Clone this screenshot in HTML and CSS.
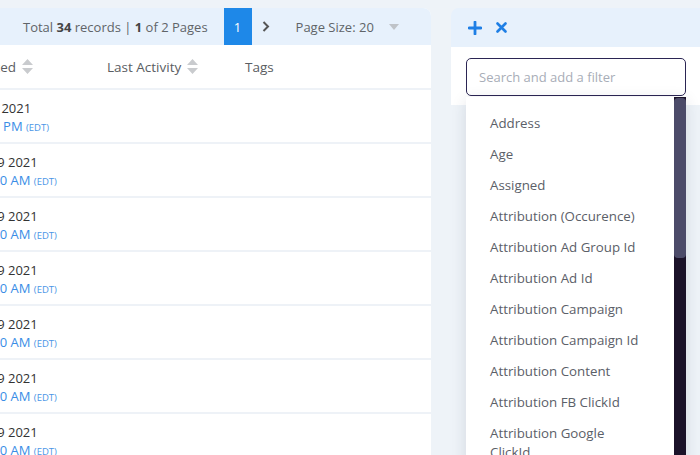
FILE: index.html
```html
<!DOCTYPE html>
<html>
<head>
<meta charset="utf-8">
<link rel="stylesheet" href="styles.css">
</head>
<body>
<div class="page">
  <section class="card">
    <div class="pager">
      <span class="total">Total <b>34</b> records | <b>1</b> of 2 Pages</span>
      <span class="page-btn">1</span>
      <svg class="chev" width="8" height="11" viewBox="0 0 8 11"><path d="M1.5 1 L6 5.5 L1.5 10" fill="none" stroke="#555" stroke-width="2"/></svg>
      <span class="size">Page Size: 20</span>
      <svg class="caret" width="10" height="6" viewBox="0 0 10 6"><path d="M0 0 H10 L5 6 Z" fill="#bfc3c8"/></svg>
    </div>
    <div class="thead">
      <div class="th th-created">Date Created <svg class="sort" width="11" height="15" viewBox="0 0 11 15"><path d="M5.5 0 L11 6 H0 Z M0 9 H11 L5.5 15 Z" fill="#c9cbce"/></svg></div>
      <div class="th">Last Activity <svg class="sort" width="11" height="15" viewBox="0 0 11 15"><path d="M5.5 0 L11 6 H0 Z M0 9 H11 L5.5 15 Z" fill="#c9cbce"/></svg></div>
      <div class="th">Tags</div>
    </div>
    <div class="row">
      <div class="cell-created"><div class="date">Aug 1 2021</div><div class="time">1:47 PM <small>(EDT)</small></div></div>
      <div></div><div></div>
    </div>
    <div class="row">
      <div class="cell-created"><div class="date">Sep 29 2021</div><div class="time">10:30 AM <small>(EDT)</small></div></div>
      <div></div><div></div>
    </div>
    <div class="row">
      <div class="cell-created"><div class="date">Sep 29 2021</div><div class="time">10:30 AM <small>(EDT)</small></div></div>
      <div></div><div></div>
    </div>
    <div class="row">
      <div class="cell-created"><div class="date">Sep 29 2021</div><div class="time">10:30 AM <small>(EDT)</small></div></div>
      <div></div><div></div>
    </div>
    <div class="row">
      <div class="cell-created"><div class="date">Sep 29 2021</div><div class="time">10:30 AM <small>(EDT)</small></div></div>
      <div></div><div></div>
    </div>
    <div class="row">
      <div class="cell-created"><div class="date">Sep 29 2021</div><div class="time">10:30 AM <small>(EDT)</small></div></div>
      <div></div><div></div>
    </div>
    <div class="row">
      <div class="cell-created"><div class="date">Sep 29 2021</div><div class="time">10:30 AM <small>(EDT)</small></div></div>
      <div></div><div></div>
    </div>
  </section>

  <aside class="panel">
    <div class="panel-head">
      <svg class="ico" width="14" height="14" viewBox="0 0 14 14"><path d="M7 1 V13 M1 7 H13" stroke="#1f7fe5" stroke-width="2.8" stroke-linecap="round"/></svg>
      <svg class="ico" width="11" height="11" viewBox="0 0 11 11"><path d="M1.5 1.5 L9.5 9.5 M9.5 1.5 L1.5 9.5" stroke="#1f7fe5" stroke-width="2.6" stroke-linecap="round"/></svg>
    </div>
    <div class="panel-body">
      <input class="search" type="text" placeholder="Search and add a filter">
    </div>
    <div class="dropdown">
      <ul class="options">
        <li>Address</li>
        <li>Age</li>
        <li>Assigned</li>
        <li>Attribution (Occurence)</li>
        <li>Attribution Ad Group Id</li>
        <li>Attribution Ad Id</li>
        <li>Attribution Campaign</li>
        <li>Attribution Campaign Id</li>
        <li>Attribution Content</li>
        <li>Attribution FB ClickId</li>
        <li>Attribution Google ClickId</li>
        <li>Attribution Medium</li>
      </ul>
      <div class="scrollbar"><div class="thumb"></div></div>
    </div>
  </aside>
</div>
</body>
</html>
```

FILE: styles.css
```css
html, body {
  margin: 0;
  padding: 0;
}
body {
  width: 700px;
  height: 455px;
  overflow: hidden;
  background: #eef3f8;
  font-family: "Open Sans", "Noto Sans", sans-serif;
  color: #555;
}
.page {
  display: flex;
  align-items: flex-start;
  gap: 20px;
  padding-top: 8px;
  margin-left: -120px;
}
.card {
  flex: 0 0 551px;
  background: #fff;
  border-top-right-radius: 8px;
  overflow: hidden;
  height: 447px;
}
.pager {
  height: 37px;
  background: #e7f1fc;
  display: flex;
  align-items: center;
  padding-left: 143px;
  font-size: 13px;
  color: #606468;
}
.pager b {
  color: #444;
  font-weight: 700;
}
.page-btn {
  margin-left: 16px;
  width: 28px;
  height: 37px;
  background: #1e88e8;
  color: #fff;
  display: flex;
  align-items: center;
  justify-content: center;
  font-size: 13px;
}
.chev {
  margin-left: 10px;
}
.size {
  margin-left: 26px;
}
.caret {
  margin-left: 15px;
}
.thead {
  display: grid;
  grid-template-columns: 227px 138px 1fr;
  height: 43px;
  border-bottom: 2px solid #eef2f7;
  font-size: 13.5px;
  color: #5a5d62;
}
.th {
  display: flex;
  align-items: center;
  gap: 6px;
}
.th-created {
  justify-content: flex-end;
  padding-right: 74px;
}
.row {
  display: grid;
  grid-template-columns: 227px 138px 1fr;
  height: 52px;
  border-bottom: 2px solid #eef2f7;
}
.cell-created {
  padding: 9px 0 0 84px;
  font-size: 13px;
  line-height: 18px;
}
.date {
  color: #333;
}
.time {
  color: #3a8de6;
  padding-left: 10px;
}
.time small {
  font-size: 9.5px;
  color: #4b95e6;
}
.panel {
  flex: 0 0 260px;
  position: relative;
  border-top-left-radius: 8px;
}
.panel-head {
  height: 39px;
  background: #e7f1fc;
  border-top-left-radius: 8px;
  display: flex;
  align-items: center;
  gap: 14px;
  padding-left: 17px;
}
.panel-body {
  background: #fff;
  padding: 11px 0 9px 15px;
}
.search {
  box-sizing: border-box;
  display: block;
  width: 220px;
  height: 38px;
  border: 1px solid #2b2553;
  border-radius: 5px;
  padding: 0 12px;
  font-family: "Open Sans", "Noto Sans", sans-serif;
  font-size: 13px;
  color: #333;
  outline: none;
}
.search::placeholder {
  color: #a8adb7;
}
.dropdown {
  position: absolute;
  top: 89px;
  left: 15px;
  width: 220px;
  height: 370px;
  background: #fff;
  display: flex;
  box-shadow: 0 3px 14px rgba(40, 50, 70, 0.13);
}
.options {
  flex: 1;
  list-style: none;
  margin: 0;
  padding: 11px 0 0 0;
  overflow: hidden;
}
.options li {
  padding: 6px 32px 6px 24px;
  line-height: 19px;
  font-size: 13.3px;
  color: #5b6068;
}
.scrollbar {
  width: 12px;
  background: #1b1229;
}
.thumb {
  margin-top: 1px;
  height: 160px;
  background: #4c4b69;
  border-radius: 4px;
}
```
